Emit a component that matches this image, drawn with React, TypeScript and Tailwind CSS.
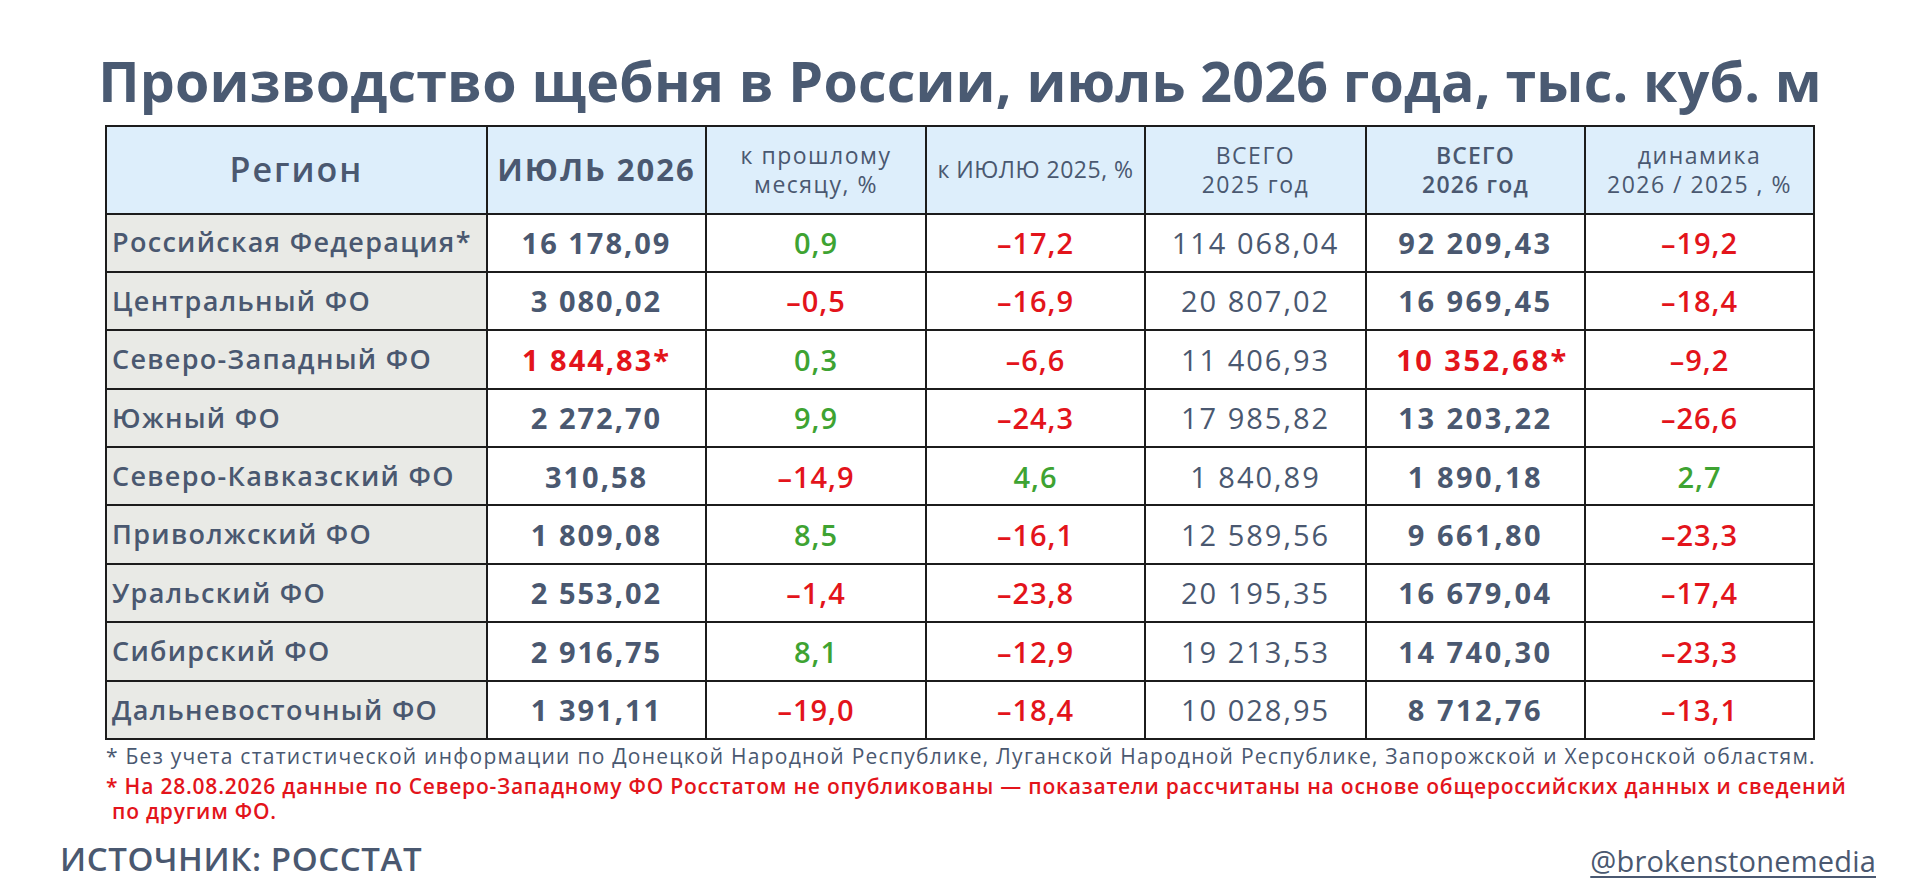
import React from "react";

type Row = [string, string, string, string, string, string, string];

const rows: Row[] = [
  ["Российская Федерация*", "16 178,09", "0,9", "–17,2", "114 068,04", "92 209,43", "–19,2"],
  ["Центральный ФО", "3 080,02", "–0,5", "–16,9", "20 807,02", "16 969,45", "–18,4"],
  ["Северо-Западный ФО", "1 844,83*", "0,3", "–6,6", "11 406,93", "10 352,68*", "–9,2"],
  ["Южный ФО", "2 272,70", "9,9", "–24,3", "17 985,82", "13 203,22", "–26,6"],
  ["Северо-Кавказский ФО", "310,58", "–14,9", "4,6", "1 840,89", "1 890,18", "2,7"],
  ["Приволжский ФО", "1 809,08", "8,5", "–16,1", "12 589,56", "9 661,80", "–23,3"],
  ["Уральский ФО", "2 553,02", "–1,4", "–23,8", "20 195,35", "16 679,04", "–17,4"],
  ["Сибирский ФО", "2 916,75", "8,1", "–12,9", "19 213,53", "14 740,30", "–23,3"],
  ["Дальневосточный ФО", "1 391,11", "–19,0", "–18,4", "10 028,95", "8 712,76", "–13,1"],
];

const pct = (v: string) => (v.startsWith("–") ? "text-[#e3141b]" : "text-[#3ea332]");

export default function App() {
  return (
    <div
      className="w-[1920px] h-[894px] bg-white overflow-hidden text-[#4a5870]"
      style={{ fontFamily: '"Open Sans", "Noto Sans", sans-serif' }}
    >
      <h1 className="pt-[53px] text-center text-[55.5px] font-bold leading-none tracking-[0.2px] text-[#4a5a72]">
        Производство щебня в России, июль 2026 года, тыс. куб. м
      </h1>

      <div className="mt-[16px] flex justify-center">
        <table className="border-collapse table-fixed w-[1708px]">
          <colgroup>
            <col className="w-[381px]" />
            <col className="w-[219px]" />
            <col className="w-[220px]" />
            <col className="w-[219px]" />
            <col className="w-[221px]" />
            <col className="w-[219px]" />
            <col className="w-[229px]" />
          </colgroup>
          <thead>
            <tr className="h-[88px] bg-[#ddeefb] text-center">
              <th className="border-2 border-[#1c1c1c] text-[34px] font-semibold tracking-[2px]">Регион</th>
              <th className="border-2 border-[#1c1c1c] text-[31px] font-bold tracking-[2px]">ИЮЛЬ 2026</th>
              <th className="border-2 border-[#1c1c1c] text-[23px] font-normal leading-[29px] tracking-[1.5px]">
                к прошлому
                <br />
                месяцу, %
              </th>
              <th className="border-2 border-[#1c1c1c] text-[23px] font-normal tracking-[0.5px]">к ИЮЛЮ 2025, %</th>
              <th className="border-2 border-[#1c1c1c] text-[23px] font-normal leading-[29px] tracking-[1.5px]">
                ВСЕГО
                <br />
                2025 год
              </th>
              <th className="border-2 border-[#1c1c1c] text-[23px] font-semibold leading-[29px] tracking-[1.2px]">
                ВСЕГО
                <br />
                2026 год
              </th>
              <th className="border-2 border-[#1c1c1c] border-l-[#8a8f96] border-l text-[23px] font-normal leading-[29px] tracking-[1.5px]">
                динамика
                <br />
                2026 / 2025 , %
              </th>
            </tr>
          </thead>
          <tbody>
            {rows.map((r, i) => (
              <tr key={i} className="h-[58.4px] text-center">
                <td className="border-2 border-[#1c1c1c] bg-[#e9eae6] text-left pl-[5px] text-[27px] font-semibold whitespace-nowrap tracking-[1.3px]">
                  {r[0]}
                </td>
                <td
                  className={`border-2 border-[#1c1c1c] text-[29px] font-bold tracking-[2px] ${
                    r[1].endsWith("*") ? "text-[#e3141b]" : ""
                  }`}
                >
                  {r[1]}
                </td>
                <td className={`border-2 border-[#1c1c1c] text-[29px] font-semibold tracking-[1px] ${pct(r[2])}`}>
                  {r[2]}
                </td>
                <td className={`border-2 border-[#1c1c1c] text-[29px] font-semibold tracking-[1px] ${pct(r[3])}`}>
                  {r[3]}
                </td>
                <td className="border-2 border-[#1c1c1c] text-[29px] font-medium tracking-[2px]">{r[4]}</td>
                <td
                  className={`border-2 border-[#1c1c1c] text-[29px] font-bold tracking-[2.5px] ${
                    r[5].endsWith("*") ? "text-[#e3141b] pl-[14px]" : ""
                  }`}
                >
                  {r[5]}
                </td>
                <td
                  className={`border-2 border-[#1c1c1c] border-l border-l-[#8a8f96] text-[29px] font-semibold tracking-[1px] ${pct(
                    r[6]
                  )}`}
                >
                  {r[6]}
                </td>
              </tr>
            ))}
          </tbody>
        </table>
      </div>

      <div className="ml-[106px] mt-[4px] text-[21px]">
        <p className="font-medium tracking-[1.25px] whitespace-nowrap leading-[24px]">
          * Без учета статистической информации по Донецкой Народной Республике, Луганской Народной Республике,
          Запорожской и Херсонской областям.
        </p>
        <p className="mt-[6px] font-semibold text-[#e3141b] tracking-[0.8px] whitespace-nowrap leading-[25px]">
          * На 28.08.2026 данные по Северо-Западному ФО Росстатом не опубликованы — показатели рассчитаны на основе
          общероссийских данных и сведений
        </p>
        <p className="font-semibold text-[#e3141b] tracking-[0.8px] whitespace-nowrap leading-[25px] pl-[6px]">
          по другим ФО.
        </p>
      </div>

      <div className="mt-[18px] flex items-end justify-between pl-[60px] pr-[44px]">
        <div className="text-[33px] font-semibold leading-none tracking-[0.6px]">ИСТОЧНИК: РОССТАТ</div>
        <div className="text-[29px] font-medium leading-none underline underline-offset-[4px] decoration-[2px] tracking-[0.2px]">
          @brokenstonemedia
        </div>
      </div>
    </div>
  );
}
